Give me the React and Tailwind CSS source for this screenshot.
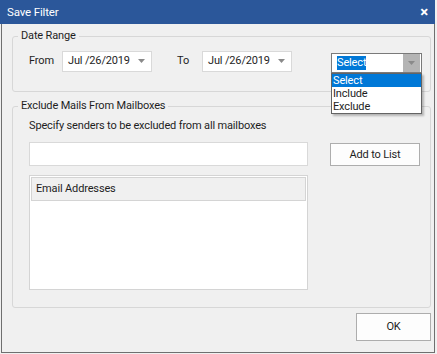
function Caret() {
    return (
        <svg width="7" height="4" viewBox="0 0 7 4">
            <path d="M0 0 H7 L3.5 4 Z" fill="#8a8a8a" />
        </svg>
    );
}

function DateBox({ value }) {
    return (
        <div className="flex h-[21px] w-[90px] items-center justify-between whitespace-nowrap border border-[#d9d9d9] bg-white pl-[5px] pr-[6px]">
            <span>{value}</span>
            <Caret />
        </div>
    );
}

export default function App() {
    return (
        <div
            className="flex h-[354px] w-[437px] flex-col bg-[#f0f0f0] text-[11px] leading-[14px] tracking-[-0.15px] text-[#1e1e1e]"
            style={{ fontFamily: 'Roboto, "Liberation Sans", Arial, sans-serif' }}
        >
            <div className="flex h-[24px] w-[435px] shrink-0 items-center justify-between bg-[#2b579a] pl-[7px] pr-[7px] text-[11.5px] text-white">
                <span>Save Filter</span>
                <span className="text-[15px] font-bold leading-none">×</span>
            </div>

            <div className="ml-px flex h-[329px] w-[434px] flex-col border-x border-b border-[#6f6f6f]">
                <fieldset className="ml-[10px] mr-[3px] mt-[5px] rounded-[3px] border border-[#d7d7d7] pb-[18px] pl-[5px] pt-[6px]">
                    <legend className="px-[3px]">Date Range</legend>
                    <div className="flex items-center whitespace-nowrap pl-[11px]">
                        <span className="w-[33px]">From</span>
                        <DateBox value="Jul /26/2019" />
                        <span className="ml-[25px] w-[25px]">To</span>
                        <DateBox value="Jul /26/2019" />
                        <div className="relative ml-[39px] mt-[4px]">
                            <div className="flex h-[20px] w-[91px] items-center justify-between border border-[#7a7a7a] bg-white pl-[5px] pr-px">
                                <span className="bg-[#0078d7] text-white">Select</span>
                                <div className="flex h-[18px] w-[17px] items-center justify-center bg-[#b4b4b4]">
                                    <Caret />
                                </div>
                            </div>
                            <div className="absolute left-0 top-[20px] z-10 w-[91px] border border-[#646464] bg-white shadow-[2px_2px_2px_rgba(0,0,0,0.25)]">
                                <div className="h-[13px] bg-[#0078d7] pl-px leading-[13px] text-white">Select</div>
                                <div className="h-[13px] pl-px leading-[13px]">Include</div>
                                <div className="h-[13px] pl-px leading-[13px]">Exclude</div>
                            </div>
                        </div>
                    </div>
                </fieldset>

                <fieldset className="ml-[10px] mr-[3px] mt-[7px] rounded-[3px] border border-[#d7d7d7] pb-[17px] pl-[5px] pt-[6px]">
                    <legend className="px-[3px]">Exclude Mails From Mailboxes</legend>
                    <div className="pl-[11px]">
                        <div>Specify senders to be excluded from all mailboxes</div>
                        <div className="mt-[9px] flex items-start">
                            <div className="h-[24px] w-[279px] border border-[#d9d9d9] bg-white" />
                            <button className="ml-[22px] mt-px h-[23px] w-[90px] border border-[#adadad] bg-[#fdfdfd] leading-[14px]">
                                Add to List
                            </button>
                        </div>
                        <div className="mt-[9px] h-[115px] w-[279px] border border-[#d4d4d4] bg-white p-px">
                            <div className="flex h-[24px] items-center border border-[#d4d4d4] bg-[#f0f0f0] pl-[4px]">
                                Email Addresses
                            </div>
                        </div>
                    </div>
                </fieldset>

                <div className="mr-[3px] mt-[5px] flex justify-end">
                    <button className="h-[28px] w-[75px] border border-[#adadad] bg-[#fdfdfd]">OK</button>
                </div>
            </div>
        </div>
    );
}
